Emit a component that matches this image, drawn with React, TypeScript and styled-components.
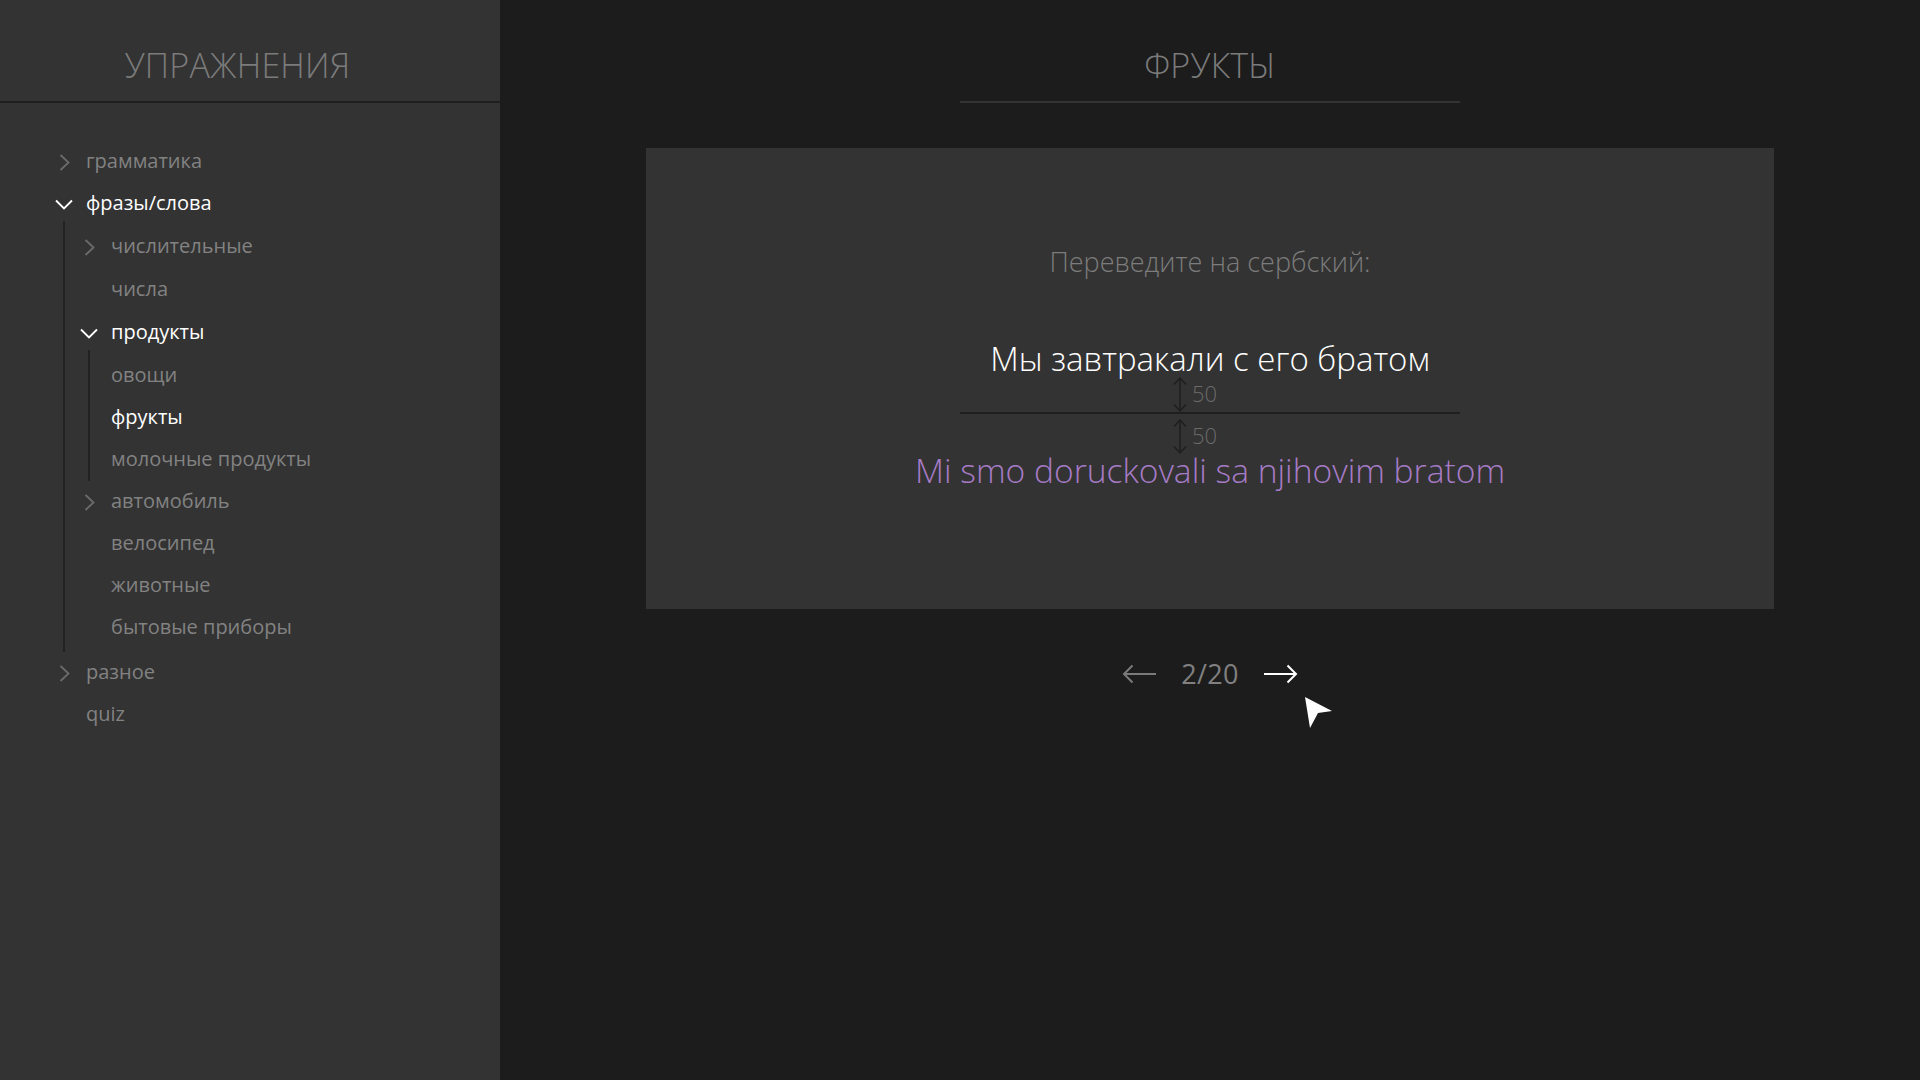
import React from "react";
import styled, { createGlobalStyle } from "styled-components";

const GlobalStyle = createGlobalStyle`
  html, body {
    margin: 0;
    padding: 0;
    background: #1c1c1c;
  }
  * { box-sizing: border-box; }
`;

const Page = styled.div`
  display: flex;
  min-height: 1080px;
  background: #1c1c1c;
  font-family: "Open Sans", "Noto Sans", sans-serif;
`;

const Sidebar = styled.aside`
  width: 500px;
  flex-shrink: 0;
  background: #333333;
  display: flex;
  flex-direction: column;
`;

const SidebarHeader = styled.header`
  height: 103px;
  border-bottom: 2px solid #1f1f1f;
  display: flex;
  justify-content: center;
  align-items: flex-start;
  padding: 47px 25px 0 0;
`;

const Title = styled.h1`
  margin: 0;
  font-size: 34px;
  line-height: 36px;
  font-weight: 300;
  color: #7b7b7b;
  letter-spacing: 0.2px;
`;

const Tree = styled.nav`
  padding: 38px 0 0 54px;
  display: flex;
  flex-direction: column;
`;

const Row = styled.div<{ $active?: boolean; $tall?: boolean }>`
  height: ${(p) => (p.$tall ? 44 : 42)}px;
  display: flex;
  align-items: center;
  gap: 12px;
  font-size: 20px;
  font-weight: 500;
  color: ${(p) => (p.$active ? "#ffffff" : "#828282")};
  white-space: nowrap;
`;

const ChevronSlot = styled.span<{ $active?: boolean }>`
  width: 20px;
  height: 20px;
  display: flex;
  align-items: center;
  justify-content: center;
  color: ${(p) => (p.$active ? "#ffffff" : "#6b6b6b")};
`;

const Label = styled.span`
  line-height: 1;
  padding-bottom: 2px;
`;

const Children = styled.div<{ $pad: number; $bottom: number }>`
  margin: -4px 0 0 9px;
  padding: 5px 0 ${(p) => p.$bottom}px ${(p) => p.$pad}px;
  border-left: 2px solid #222222;
  display: flex;
  flex-direction: column;
`;

const Main = styled.main`
  flex: 1;
  display: flex;
  flex-direction: column;
  align-items: center;
`;

const MainHeader = styled.header`
  width: 500px;
  height: 103px;
  border-bottom: 2px solid #333333;
  display: flex;
  justify-content: center;
  align-items: flex-start;
  padding-top: 47px;
`;

const Card = styled.section`
  margin-top: 45px;
  width: 1128px;
  height: 461px;
  background: #333333;
  display: flex;
  flex-direction: column;
  align-items: center;
  padding-top: 98px;
`;

const Prompt = styled.div`
  font-size: 27px;
  line-height: 32px;
  font-weight: 300;
  color: #7c7c7c;
`;

const Sentence = styled.div`
  margin-top: 61px;
  font-size: 33px;
  line-height: 40px;
  font-weight: 300;
  color: #ffffff;
`;

const DividerBlock = styled.div`
  position: relative;
  width: 500px;
  height: 2px;
  margin-top: 33px;
  background: #1f1f1f;
`;

const Measure = styled.div<{ $top: number }>`
  position: absolute;
  left: 213px;
  top: ${(p) => p.$top}px;
  display: flex;
  align-items: flex-start;
  gap: 5px;
`;

const MeasureLabel = styled.span`
  font-size: 22px;
  line-height: 22px;
  font-weight: 300;
  color: #6a6a6a;
  margin-top: 5px;
`;

const Answer = styled.div`
  margin-top: 36px;
  font-size: 33.6px;
  line-height: 40px;
  font-weight: 300;
  color: #a67bc6;
`;

const Pager = styled.div`
  margin-top: 45px;
  height: 40px;
  display: flex;
  align-items: center;
  gap: 24px;
`;

const PagerButton = styled.button<{ $bright?: boolean }>`
  position: relative;
  border: 0;
  padding: 0;
  background: none;
  width: 35px;
  height: 40px;
  display: flex;
  align-items: center;
  justify-content: center;
  color: ${(p) => (p.$bright ? "#ffffff" : "#7a7a7a")};
  cursor: pointer;
`;

const Counter = styled.span`
  font-size: 27px;
  line-height: 40px;
  font-weight: 400;
  color: #808080;
  letter-spacing: 0.3px;
`;

const Pointer = styled.svg`
  position: absolute;
  left: 42px;
  top: 43px;
`;

type Node = {
  label: string;
  active?: boolean;
  open?: boolean;
  children?: Node[];
};

const tree: Node[] = [
  { label: "грамматика", children: [] },
  {
    label: "фразы/слова",
    active: true,
    open: true,
    children: [
      { label: "числительные", children: [] },
      { label: "числа" },
      {
        label: "продукты",
        active: true,
        open: true,
        children: [
          { label: "овощи" },
          { label: "фрукты", active: true },
          { label: "молочные продукты" },
        ],
      },
      { label: "автомобиль", children: [] },
      { label: "велосипед" },
      { label: "животные" },
      { label: "бытовые приборы" },
    ],
  },
  { label: "разное", children: [] },
  { label: "quiz" },
];

const ChevronRight = () => (
  <svg width="11" height="17" viewBox="0 0 11 17" fill="none">
    <polyline points="1.5,1 9.5,8.5 1.5,16" stroke="currentColor" strokeWidth="1.8" />
  </svg>
);

const ChevronDown = () => (
  <svg width="18" height="11" viewBox="0 0 18 11" fill="none">
    <polyline points="1,1.5 9,9.5 17,1.5" stroke="currentColor" strokeWidth="1.8" />
  </svg>
);

const TreeItem: React.FC<{ node: Node; depth: number }> = ({ node, depth }) => {
  const hasChildren = node.children !== undefined;
  const showSlot = depth < 2;
  return (
    <>
      <Row $active={node.active} $tall={depth === 1 && node.label === "числа"}>
        {showSlot && (
          <ChevronSlot $active={node.active}>
            {hasChildren && (node.open ? <ChevronDown /> : <ChevronRight />)}
          </ChevronSlot>
        )}
        <Label>{node.label}</Label>
      </Row>
      {node.open && node.children && node.children.length > 0 && (
        <Children $pad={depth === 0 ? 14 : 21} $bottom={depth === 0 ? 3 : 0}>
          {node.children.map((c) => (
            <TreeItem key={c.label} node={c} depth={depth + 1} />
          ))}
        </Children>
      )}
    </>
  );
};

const MeasureArrow = () => (
  <svg width="14" height="35" viewBox="0 0 14 35" fill="none">
    <line x1="7" y1="1" x2="7" y2="34" stroke="#1f1f1f" strokeWidth="1.5" />
    <polyline points="1,7.5 7,1 13,7.5" stroke="#1f1f1f" strokeWidth="1.5" />
    <polyline points="1,27.5 7,34 13,27.5" stroke="#1f1f1f" strokeWidth="1.5" />
  </svg>
);

const LongArrow: React.FC<{ dir: "left" | "right" }> = ({ dir }) => (
  <svg width="35" height="20" viewBox="0 0 35 20" fill="none" style={dir === "left" ? { transform: "scaleX(-1)" } : undefined}>
    <line x1="1" y1="10" x2="33" y2="10" stroke="currentColor" strokeWidth="2" />
    <polyline points="24.5,1.5 33,10 24.5,18.5" stroke="currentColor" strokeWidth="2" />
  </svg>
);

export default function App() {
  return (
    <>
      <GlobalStyle />
      <Page>
        <Sidebar>
          <SidebarHeader>
            <Title>УПРАЖНЕНИЯ</Title>
          </SidebarHeader>
          <Tree>
            {tree.map((n) => (
              <TreeItem key={n.label} node={n} depth={0} />
            ))}
          </Tree>
        </Sidebar>
        <Main>
          <MainHeader>
            <Title>ФРУКТЫ</Title>
          </MainHeader>
          <Card>
            <Prompt>Переведите на сербский:</Prompt>
            <Sentence>Мы завтракали с его братом</Sentence>
            <DividerBlock>
              <Measure $top={-35}>
                <MeasureArrow />
                <MeasureLabel>50</MeasureLabel>
              </Measure>
              <Measure $top={7}>
                <MeasureArrow />
                <MeasureLabel>50</MeasureLabel>
              </Measure>
            </DividerBlock>
            <Answer>Mi smo doruckovali sa njihovim bratom</Answer>
          </Card>
          <Pager>
            <PagerButton>
              <LongArrow dir="left" />
            </PagerButton>
            <Counter>2/20</Counter>
            <PagerButton $bright>
              <LongArrow dir="right" />
              <Pointer width="28" height="32" viewBox="0 0 28 32">
                <polygon points="0,0 27,14 13,16 5,31" fill="#ffffff" />
              </Pointer>
            </PagerButton>
          </Pager>
        </Main>
      </Page>
    </>
  );
}
